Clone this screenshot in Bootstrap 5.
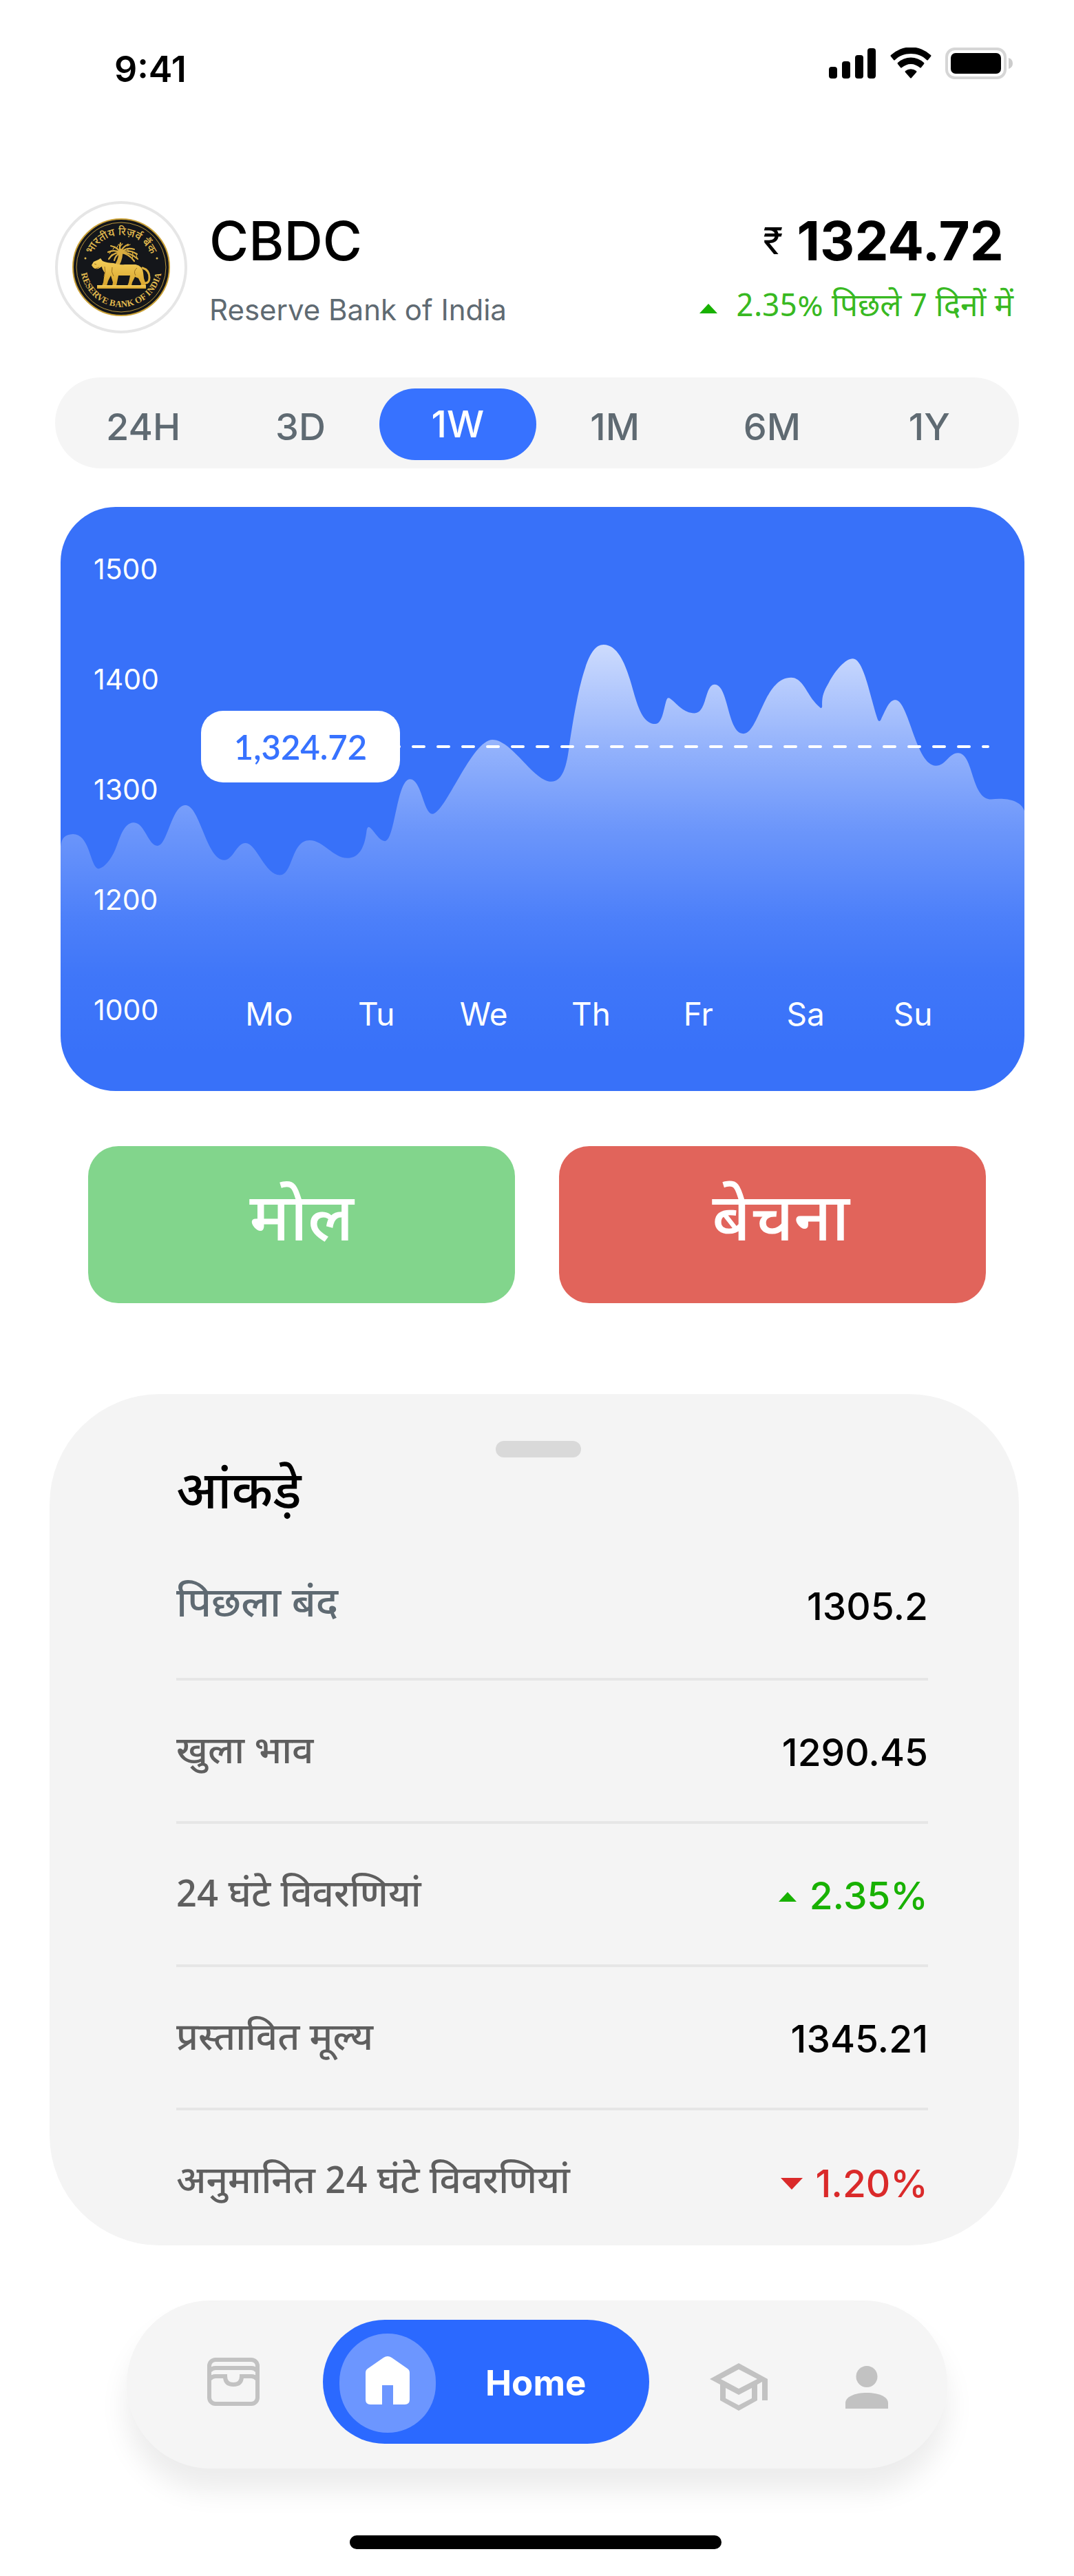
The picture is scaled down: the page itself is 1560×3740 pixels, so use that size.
<!DOCTYPE html>
<html lang="hi">
<head>
<meta charset="utf-8">
<meta name="viewport" content="width=device-width, initial-scale=1">
<title>CBDC</title>
<link href="https://cdn.jsdelivr.net/npm/bootstrap@5.3.0/dist/css/bootstrap.min.css" rel="stylesheet">
<style>
  body { font-family: Inter, "Noto Sans", "Noto Sans Devanagari", sans-serif; color: #000; background: #fff; }
  .hindi { font-family: "Noto Sans Devanagari", "Noto Sans", "Open Sans", sans-serif; }
  .status-bar { padding: 69px 88px 0 166px; }
  .clock { font-size: 52px; line-height: 64px; font-weight: 600; }
  .coin-head { margin: 159px 80px 0; gap: 32px; }
  .coin-ring { width: 192px; height: 192px; border: 4px solid #e6e6e6; }
  .coin-name { font-size: 78px; line-height: 80px; font-weight: 500; margin: 18px 0 32px; }
  .coin-sub { font-size: 42px; line-height: 56px; color: #5f6a72; }
  .price { font-size: 78px; line-height: 80px; font-weight: 700; margin: 18px 22px 30px 0; gap: 20px; }
  .rupee { font-size: 54px; font-weight: 400; }
  .change { font-size: 46px; line-height: 56px; color: #38b922; gap: 28px; margin-right: 8px; }
  .ranges { margin: 64px 80px 0; padding: 16px 16px 12px 14px; background: #f5f5f5; }
  .ranges .nav-link { height: 104px; padding: 8px 0 0; border-radius: 52px; font-size: 54px; line-height: 96px; font-weight: 500; color: #5f6a72; }
  .ranges .nav-link.active { padding: 0; line-height: 104px; background: #3772ff; color: #fff; }
  .chart { margin: 56px 72px 0 88px; height: 848px; border-radius: 80px; background: #3871f9; color: #fff; }
  .chart-area { inset: 0; width: 100%; height: 100%; }
  .levels { width: 225px; padding: 10px 0 0 48px; font-size: 41px; line-height: 160px; }
  .days { margin: 0 84px 84px 0; font-size: 46px; line-height: 56px; }
  .tip { left: 204px; top: 296px; width: 289px; border-radius: 32px; font: 600 49px/104px Lato, sans-serif; color: #3772ff; background: #fff; }
  .trade { margin: 80px 128px 0; gap: 64px; }
  .trade .btn { height: 228px; border: 0; border-radius: 44px; font-size: 96px; line-height: 1; font-weight: 500; color: #fff; }
  .buy, .buy:hover { background: #82d58c; }
  .sell, .sell:hover { background: #e1645b; }
  .sheet { margin: 132px 80px 0 72px; padding: 68px 132px 0 184px; border-radius: 160px; background: #f4f4f4; }
  .grip { width: 124px; height: 24px; margin-left: 464px; background: #d9d9d9; }
  .sheet-title { font-size: 76px; line-height: 112px; font-weight: 500; margin: 0; }
  .stats th, .stats td { padding: 68px 0 64px; border-bottom: 4px solid #e6e6e6; line-height: 72px; }
  .stats th { padding-top: 71px; padding-bottom: 61px; font-size: 55px; font-weight: 500; color: #5f5f5f; }
  .stats td { font-size: 55px; font-weight: 500; text-align: right; }
  .stats svg { vertical-align: 11px; }
  .stats tr:first-child > * { padding-top: 68px; padding-bottom: 68px; }
  .stats tr:first-child th { font-size: 60px; color: #5f6a72; }
  .stats tr:last-child > * { padding-bottom: 53px; border: 0; }
  .up { color: #18b100; }
  .down { color: #da2a2a; }
  .dock { margin: 80px 184px 0; padding: 28px 86px 36px 117px; gap: 88px; background: #f5f5f5; box-shadow: 0 32px 40px rgba(0,0,0,.08); }
  .dock a { color: #c2c2c2; }
  .dock .dock-home { margin-left: 4px; padding: 20px 90px 16px 24px; gap: 72px; background: #2b69ff; color: #fff; font-size: 51px; font-weight: 700; line-height: 64px; }
  .dock-disc { width: 140px; height: 144px; background: #6c96ff; }
  .dock-low { padding-top: 16px; }
  .home-bar { height: 20px; margin: 97px 512px 0 508px; background: #000; }
</style>
</head>
<body>
<header class="status-bar d-flex justify-content-between align-items-start">
  <span class="clock">9:41</span>
  <svg width="268" height="46" viewBox="0 0 268 46" aria-hidden="true">
    <rect x="0" y="28" width="12" height="17" rx="4"/><rect x="19" y="20" width="12" height="25" rx="4"/><rect x="38" y="11" width="12" height="34" rx="4"/><rect x="56" y="1" width="12" height="44" rx="4"/>
    <path d="M119 9c9 0 17 3 23 9q1 1 2 0l4-5q1-1 0-2a42 42 0 0 0-58 0q-1 1 0 2l4 5q1 1 2 0c6-6 14-9 23-9z"/>
    <path d="M119 24c5 0 9 2 13 5q1 1 2 0l4-5q1-1 0-2a28 28 0 0 0-38 0q-1 1 0 2l4 5q1 1 2 0c4-3 8-5 13-5z"/>
    <path d="M127 34q1 1 0 2l-7 8q-1 1-2 0l-7-8q-1-1 0-2a13 13 0 0 1 16 0z"/>
    <rect x="171" y="2" width="85" height="42" rx="12" fill="none" stroke="#d6d6d6" stroke-width="4"/>
    <rect x="177" y="8" width="73" height="30" rx="7"/><path d="M261 15q6 2 6 8t-6 8z" fill="#ccc"/>
  </svg>
</header>

<main>
  <section class="coin-head d-flex align-items-start">
    <div class="coin-ring rounded-circle d-flex flex-shrink-0 align-items-center justify-content-center">
      <svg width="142" height="142" viewBox="0 0 142 142" role="img" aria-label="Reserve Bank of India">
        <defs>
          <path id="arcTop" d="M24.500 71a46.500 46.500 0 0 1 93 0"/>
          <path id="arcLow" d="M12.500 62a59 59 0 1 0 117 0"/>
          <linearGradient id="gold" x1="0" y1="0" x2="0" y2="1"><stop offset="0" stop-color="#f4cf5c"/><stop offset="1" stop-color="#d9a52c"/></linearGradient>
        </defs>
        <circle cx="71" cy="71" r="70" fill="#14161a" stroke="#c9a036" stroke-width="2"/>
        <circle cx="71" cy="71" r="65" fill="none" stroke="#b8953a" stroke-width="1"/>
        <g fill="#e0b94e">
          <text font-family="'Noto Sans Devanagari','Noto Sans',sans-serif" font-size="16" font-weight="500" text-anchor="middle"><textPath href="#arcTop" startOffset="50%">भारतीय रिज़र्व बैंक</textPath></text>
          <text font-family="'Liberation Serif',serif" font-size="13" font-weight="700" text-anchor="middle"><textPath href="#arcLow" startOffset="50%">RESERVE BANK OF INDIA</textPath></text>
          <circle cx="19" cy="58" r="1.500"/><circle cx="123" cy="58" r="1.500"/>
        </g>
        <g fill="none" stroke="#d9ad40" stroke-width="2.200" stroke-linecap="round">
          <path d="M66 66q5-9 4-19" stroke-width="6"/>
          <path d="M70 50q-4-8-14-10M70 50q-8-5-18-1M70 50q-10-1-17 9M70 50q-2-8 0-14M70 50q3-9 11-12M70 50q8-9 20-5M70 50q11-6 24 2M70 50q12-2 25 9M70 50q12 1 20 12M70 50q-7 3-9 11"/>
          <path d="M62 41l-3 4M57 47l-3 4M58 52l-4 5M80 44l2 5M87 48l1 5M88 54l-1 5M80 40l4-2M64 44l2-4M93 53l1 5M70 40l3-3M70 41l-3-3" stroke-width="1.200"/>
        </g>
        <g fill="url(#gold)">
          <path d="M28 68l3-5 7-3 3-2 3 4q7 3 16 3 8 3 16 2h16q10 2 11 12l1 8 3 9-2 2h-6l1-3-4-8-5-2-4 8-1 5h-6l2-5 2-10H67l-2 10-1 5h-6l1-5-3-10-4 8-2 7h-7l2-5 2-14q-4-6-4-9l-5 3q-6 1-8-2z"/>
          <path d="M36 97h71v5H36z"/>
        </g>
        <path d="M102 72q10 3 10 14 0 8-6 8" fill="none" stroke="#ddb03c" stroke-width="3" stroke-linecap="round"/>
        <path d="M32 66l3 1M34 73l5-2M47 70q2 8-1 15M58 71q-2 7 2 13M94 72q-6 5-2 11" fill="none" stroke="#9a7020" stroke-width="1"/>
      </svg>
    </div>
    <div class="flex-grow-1">
      <h1 class="coin-name">CBDC</h1>
      <div class="coin-sub">Reserve Bank of India</div>
    </div>
    <div>
      <div class="price d-flex justify-content-end align-items-center"><span class="rupee">₹</span><span>1324.72</span></div>
      <div class="change hindi d-flex justify-content-end align-items-center">
        <svg width="26" height="14" viewBox="0 0 26 14" aria-hidden="true"><path d="M13 0l13 14H0z" fill="#18b100"/></svg>
        <span>2.35% पिछले 7 दिनों में</span>
      </div>
    </div>
  </section>

  <nav class="ranges nav nav-pills nav-justified rounded-pill" aria-label="Range">
    <button type="button" class="nav-link">24H</button>
    <button type="button" class="nav-link">3D</button>
    <button type="button" class="nav-link active" aria-current="true">1W</button>
    <button type="button" class="nav-link">1M</button>
    <button type="button" class="nav-link">6M</button>
    <button type="button" class="nav-link">1Y</button>
  </nav>

  <section class="chart position-relative overflow-hidden d-flex align-items-end">
    <svg class="chart-area position-absolute" viewBox="0 0 1400 848" preserveAspectRatio="none" aria-hidden="true">
      <defs>
        <linearGradient id="fade" gradientUnits="userSpaceOnUse" x1="0" y1="385" x2="0" y2="1450">
          <stop offset="0" stop-color="#fff" stop-opacity=".75"/><stop offset=".25" stop-color="#fff" stop-opacity=".46"/>
          <stop offset=".45" stop-color="#fff" stop-opacity=".26"/><stop offset=".67" stop-color="#fff" stop-opacity=".1"/>
          <stop offset=".8" stop-color="#fff" stop-opacity=".04"/><stop offset="1" stop-color="#fff" stop-opacity="0"/>
        </linearGradient>
      </defs>
      <path transform="translate(-28 -16) scale(.4847 .5612)" fill="url(#fade)" d="M57 912C60 885 70 876 95 875C142 875 145 945 165 962Q168 966 174 964C190 960 208 942 222 914C235 888 245 846 277 845C310 845 320 905 348 905C378 905 390 800 432 800C475 800 495 942 548 942C575 942 585 898 612 898C645 898 670 981 715 981C755 981 748 891 804 891C845 891 875 937 917 937C955 937 970 905 975 865Q978 852 986 859C1000 870 1013 893 1030 893C1060 893 1065 733 1105 733C1140 733 1145 823 1172 823C1210 823 1290 631 1352 631C1410 631 1475 739 1528 739C1562 739 1575 700 1583 640C1592 590 1608 500 1630 445C1645 405 1662 385 1685 385C1725 385 1748 430 1764 475C1782 525 1795 590 1840 590C1862 590 1866 545 1874 527Q1878 519 1887 526C1905 538 1925 562 1957 562C1995 562 1988 488 2018 488C2060 488 2055 615 2104 615C2150 615 2165 470 2247 470C2285 470 2295 520 2332 546Q2339 552 2340 545C2338 515 2348 502 2360 483C2380 450 2410 421 2432 421C2465 421 2485 525 2505 575Q2510 588 2516 579C2530 555 2540 528 2559 528C2600 528 2620 698 2681 698C2710 698 2720 665 2747 665C2795 665 2785 785 2847 785C2885 780 2943 785 2948 822V1545H57z"/>
      <path d="M476 348H1347" stroke="#fff" stroke-width="4" stroke-dasharray="16 20" stroke-linecap="round"/>
    </svg>
    <div class="levels position-relative flex-shrink-0 align-self-start">
      <div>1500</div><div>1400</div><div>1300</div><div>1200</div><div>1000</div>
    </div>
    <div class="days position-relative row g-0 flex-grow-1 text-center">
      <span class="col">Mo</span><span class="col">Tu</span><span class="col">We</span><span class="col">Th</span><span class="col">Fr</span><span class="col">Sa</span><span class="col">Su</span>
    </div>
    <div class="tip position-absolute text-center">1,324.72</div>
  </section>

  <div class="trade d-flex hindi">
    <button type="button" class="btn buy w-50">मोल</button>
    <button type="button" class="btn sell w-50"><span class="ps-4">बेचना</span></button>
  </div>

  <section class="sheet">
    <div class="grip rounded-pill"></div>
    <h2 class="sheet-title hindi">आंकड़े</h2>
    <table class="stats w-100">
      <tbody>
        <tr><th scope="row" class="hindi">पिछला बंद</th><td>1305.2</td></tr>
        <tr><th scope="row" class="hindi">खुला भाव</th><td>1290.45</td></tr>
        <tr><th scope="row" class="hindi">24 घंटे विवरणियां</th><td class="up"><svg class="me-1" width="26" height="14" viewBox="0 0 26 14" aria-hidden="true"><path d="M13 0l13 14H0z" fill="currentColor"/></svg> 2.35%</td></tr>
        <tr><th scope="row" class="hindi">प्रस्तावित मूल्य</th><td>1345.21</td></tr>
        <tr><th scope="row" class="hindi">अनुमानित 24 घंटे विवरणियां</th><td class="down"><svg class="me-1" width="32" height="17" viewBox="0 0 32 17" aria-hidden="true"><path d="M0 0h32L16 17z" fill="currentColor"/></svg> 1.20%</td></tr>
      </tbody>
    </table>
  </section>
</main>

<nav class="dock d-flex align-items-center rounded-pill" aria-label="Main">
  <a href="#" aria-label="Wallet"><svg class="d-block" width="76" height="70" viewBox="0 0 76 70" fill="none" stroke="currentColor" stroke-width="6"><rect x="3" y="3" width="70" height="64" rx="9"/><path d="M4 19q3-4 8-4h52q5 0 8 4M4 31q3-4 8-4h14q0 12 12 12t12-12h14q5 0 8 4"/></svg></a>
  <a href="#" class="dock-home d-flex flex-grow-1 align-items-center rounded-pill text-decoration-none" aria-current="page">
    <span class="dock-disc rounded-pill d-flex flex-shrink-0 justify-content-center align-items-center pb-2">
      <svg width="64" height="70" viewBox="0 0 64 70" aria-hidden="true"><path d="M26 2q6-4 12 0l23 16q3 2 3 6v39q0 7-7 7H40V42H24v28H7q-7 0-7-7V24q0-4 3-6z" fill="#fff"/></svg>
    </span>
    <span>Home</span>
  </a>
  <a href="#" class="dock-low" aria-label="Learn"><svg class="d-block" width="85" height="70" viewBox="0 0 85 70" fill="currentColor"><path fill-rule="evenodd" d="M42 0l42 23v31h-8V27l-7 4v23L42 69 15 54V31L0 23zM42 9L16 23l26 14 27-14zM23 36v15l19 10 19-10V36L42 46z"/></svg></a>
  <a href="#" class="dock-low ms-4" aria-label="Profile"><svg class="d-block" width="62" height="62" viewBox="0 0 62 62" fill="currentColor"><circle cx="31" cy="15.500" r="15.500"/><path d="M0 62v-8c0-9 13-15 31-15s31 6 31 15v8z"/></svg></a>
</nav>
<div class="home-bar rounded-pill"></div>
<script src="https://cdn.jsdelivr.net/npm/bootstrap@5.3.0/dist/js/bootstrap.bundle.min.js"></script>
</body>
</html>
